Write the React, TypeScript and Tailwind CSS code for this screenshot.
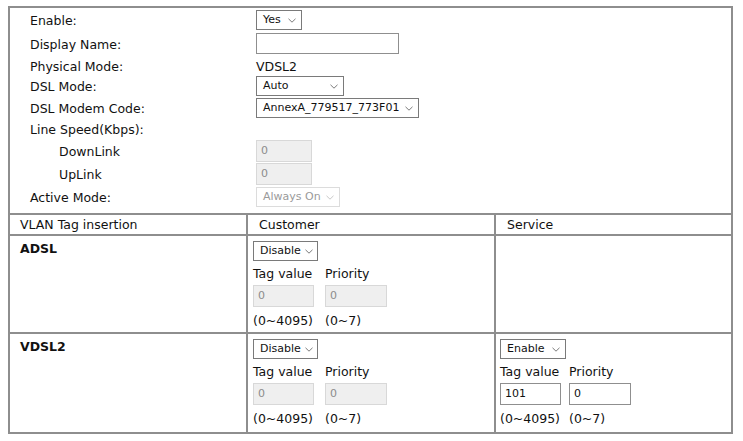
import React from 'react';

const Chevron = ({ disabled }: { disabled?: boolean }) => (
  <svg width="8" height="5" viewBox="0 0 8 5" className="shrink-0">
    <path d="M0.5 0.8 L4 4.2 L7.5 0.8" fill="none" stroke={disabled ? '#c8c8c8' : '#7a7a7a'} strokeWidth="1" />
  </svg>
);

const Select = ({ value, className, disabled }: { value: string; className: string; disabled?: boolean }) => (
  <div
    className={`flex h-[20px] items-center justify-between gap-1 border bg-white pl-[6px] pr-[5px] pt-[1px] text-[11px] ${
      disabled ? 'border-[#dcdcdc] text-[#9a9a9a]' : 'border-[#7a7a7a] text-[#111]'
    } ${className}`}
  >
    <span className="whitespace-nowrap">{value}</span>
    <Chevron disabled={disabled} />
  </div>
);

const Input = ({ value, className, disabled }: { value?: string; className: string; disabled?: boolean }) => (
  <div
    className={`flex items-center border pl-[4px] pt-[1px] text-[11px] ${
      disabled ? 'border-[#d8d8d8] bg-[#efefef] text-[#8c8c8c]' : 'border-[#8f8f8f] bg-white text-[#111]'
    } ${className}`}
  >
    {value}
  </div>
);

const FormRow = ({ label, h, indent, children }: { label: string; h: string; indent?: boolean; children?: React.ReactNode }) => (
  <div className={`flex items-center ${h}`}>
    <div className={`w-[246px] shrink-0 pt-[3px] ${indent ? 'pl-[49px]' : 'pl-[20px]'}`}>{label}</div>
    {children}
  </div>
);

const TagBlock = ({ mode, tag, prio, disabled, gap }: { mode: string; tag: string; prio: string; disabled: boolean; gap: string }) => (
  <div className="flex flex-col pt-[5px]">
    <Select value={mode} className={mode === 'Enable' ? 'w-[66px]' : 'w-[65px]'} />
    <div className={`grid grid-cols-[auto_auto] justify-start ${gap}`}>
      <div className="flex h-[24px] items-center pt-[3px]">Tag value</div>
      <div className="flex h-[24px] items-center pt-[3px]">Priority</div>
      <Input value={tag} disabled={disabled} className="h-[22px] w-[61px]" />
      <Input value={prio} disabled={disabled} className="h-[22px] w-[62px]" />
      <div className="flex h-[26px] items-center pt-[3px]">(0~4095)</div>
      <div className="flex h-[26px] items-center pt-[3px]">(0~7)</div>
    </div>
  </div>
);

export default function App() {
  return (
    <div className="min-h-screen bg-white pt-[6px] font-['DejaVu_Sans',Verdana,sans-serif] text-[12.5px] text-[#111]">
      <div className="ml-[8px] w-[725px] border-2 border-[#8e8e8e]">
        <div className="pb-[5px]">
          <FormRow label="Enable:" h="h-[24px]">
            <Select value="Yes" className="w-[46px]" />
          </FormRow>
          <FormRow label="Display Name:" h="h-[23px]">
            <Input className="h-[21px] w-[143px]" />
          </FormRow>
          <FormRow label="Physical Mode:" h="h-[21px]">
            <span className="pt-[3px]">VDSL2</span>
          </FormRow>
          <FormRow label="DSL Mode:" h="h-[20px]">
            <Select value="Auto" className="w-[88px]" />
          </FormRow>
          <FormRow label="DSL Modem Code:" h="h-[23px]">
            <Select value="AnnexA_779517_773F01" className="w-[163px]" />
          </FormRow>
          <FormRow label="Line Speed(Kbps):" h="h-[20px]" />
          <FormRow label="DownLink" h="h-[23px]" indent>
            <Input value="0" disabled className="h-[22px] w-[56px]" />
          </FormRow>
          <FormRow label="UpLink" h="h-[24px]" indent>
            <Input value="0" disabled className="h-[22px] w-[56px]" />
          </FormRow>
          <FormRow label="Active Mode:" h="h-[22px]">
            <Select value="Always On" disabled className="w-[84px]" />
          </FormRow>
        </div>

        <div className="grid grid-cols-[236px_248px_1fr] border-t-2 border-[#8e8e8e]">
          <div className="flex h-[19px] items-center pl-[10px] pt-[2px]">VLAN Tag insertion</div>
          <div className="flex h-[19px] items-center border-l-2 border-[#8e8e8e] pl-[11px] pt-[2px]">Customer</div>
          <div className="flex h-[19px] items-center border-l-2 border-[#8e8e8e] pl-[11px] pt-[2px]">Service</div>

          <div className="h-[98px] border-t-2 border-[#8e8e8e] pl-[10px] pt-[4px] font-bold">ADSL</div>
          <div className="h-[98px] border-t-2 border-l-2 border-[#8e8e8e] pl-[5px]">
            <TagBlock mode="Disable" tag="0" prio="0" disabled gap="gap-x-[11px]" />
          </div>
          <div className="h-[98px] border-t-2 border-l-2 border-[#8e8e8e]" />

          <div className="h-[100px] border-t-2 border-[#8e8e8e] pl-[10px] pt-[4px] font-bold">VDSL2</div>
          <div className="h-[100px] border-t-2 border-l-2 border-[#8e8e8e] pl-[5px]">
            <TagBlock mode="Disable" tag="0" prio="0" disabled gap="gap-x-[11px]" />
          </div>
          <div className="h-[100px] border-t-2 border-l-2 border-[#8e8e8e] pl-[4px]">
            <TagBlock mode="Enable" tag="101" prio="0" disabled={false} gap="gap-x-[8px]" />
          </div>
        </div>
      </div>
    </div>
  );
}
